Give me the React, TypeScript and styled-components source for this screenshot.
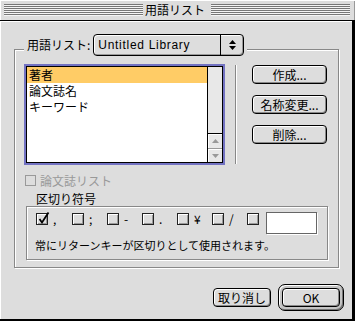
import styled, { createGlobalStyle } from "styled-components";

const GlobalStyle = createGlobalStyle`
  * { box-sizing: border-box; }
  html, body { margin: 0; padding: 0; background: #dddddd; }
  body {
    font-family: "Noto Sans CJK JP", "DejaVu Sans", sans-serif;
    font-size: 12px;
    color: #000;
  }
`;

const Window = styled.div`
  width: 355px;
  height: 321px;
  display: flex;
  flex-direction: column;
  background: #dddddd;
`;

const TitleBar = styled.div`
  flex: none;
  height: 21px;
  display: flex;
  align-items: center;
  padding: 0 5px 1px 4px;
  border-bottom: 1px solid #000;
  box-shadow: inset 1px 1px 0 #fff, inset -1px 0 0 #999;
`;

const Stripes = styled.div`
  flex: 1;
  height: 12px;
  background: repeating-linear-gradient(to bottom, #777 0 1px, #f4f4f4 1px 2px);
`;

const Title = styled.div`
  width: 68px;
  padding: 0 6px 0 2px;
  line-height: 14px;
  text-align: center;
`;

const Body = styled.div`
  flex: 1;
  display: flex;
  flex-direction: column;
  padding: 28px 0 0 14px;
  border-right: 3px solid #000;
  border-bottom: 2px solid #000;
  box-shadow: inset 1px 1px 0 #fff;
`;

const Group = styled.div<{ $w: number; $h: number }>`
  position: relative;
  width: ${(p) => p.$w}px;
  height: ${(p) => p.$h}px;
  border: 1px solid #888;
  box-shadow: inset 1px 1px 0 #fff, 1px 1px 0 #fff;
`;

const OuterGroup = styled(Group)`
  padding: 14px 11px 0 9px;
`;

const InnerGroup = styled(Group)`
  margin-top: 19px;
  margin-left: 2px;
  padding: 5px 0 0 9px;
`;

const Legend = styled.div<{ $left: number; $top: number }>`
  position: absolute;
  left: ${(p) => p.$left}px;
  top: ${(p) => p.$top}px;
  display: flex;
  align-items: center;
  gap: 3px;
  padding: 0 3px;
  background: #dddddd;
  line-height: 14px;
`;

const Popup = styled.div`
  width: 151px;
  height: 22px;
  display: flex;
  border: 1px solid #000;
  border-radius: 4px;
  background: #dddddd;
  box-shadow: inset 1px 1px 0 #fff, inset -1px -1px 0 #999;
`;

const PopupText = styled.div`
  flex: 1;
  padding-left: 4px;
  font-family: "Liberation Sans", "Noto Sans CJK JP", sans-serif;
  line-height: 20px;
  letter-spacing: 0.7px;
`;

const PopupArrow = styled.div`
  width: 23px;
  border-left: 1px solid #000;
  display: flex;
  align-items: center;
  justify-content: center;
`;

const TopRow = styled.div`
  display: flex;
  align-items: flex-start;
`;

const ListFrame = styled.div`
  width: 201px;
  height: 101px;
  border: 2px solid #7272c2;
  display: flex;
`;

const ListInner = styled.div`
  flex: 1;
  display: flex;
  border: 1px solid #000;
  background: #fff;
`;

const Rows = styled.div`
  flex: 1;
`;

const Row = styled.div<{ $selected?: boolean }>`
  height: 16px;
  padding-left: 2px;
  line-height: 16px;
  background: ${(p) => (p.$selected ? "#ffcc66" : "transparent")};
`;

const ScrollBar = styled.div`
  width: 15px;
  display: flex;
  flex-direction: column;
  border-left: 1px solid #000;
  background: #e8e8e8;
`;

const Track = styled.div`
  flex: 1;
  border-bottom: 1px solid #000;
`;

const ScrollArrow = styled.div<{ $h: number; $divider?: boolean }>`
  height: ${(p) => p.$h}px;
  display: flex;
  align-items: center;
  justify-content: center;
  border-bottom: ${(p) => (p.$divider ? "1px solid #999" : "none")};
  box-shadow: inset 1px 1px 0 #fff;
`;

const Separator = styled.div`
  width: 2px;
  height: 99px;
  margin: 1px 15px 0 10px;
  border-left: 1px solid #888;
  background: #fff;
`;

const ButtonColumn = styled.div`
  display: flex;
  flex-direction: column;
  gap: 11px;
  margin-top: 1px;
`;

const Button = styled.button<{ $w: number }>`
  width: ${(p) => p.$w}px;
  height: 19px;
  padding: 0;
  border: 1px solid #000;
  border-radius: 4px;
  background: #dddddd;
  box-shadow: inset 1px 1px 0 #fff, inset -1px -1px 0 #888;
  font-family: inherit;
  font-size: 12px;
  line-height: 17px;
  color: #000;
`;

const DefaultRing = styled.div`
  padding: 3px;
  border: 1px solid #000;
  border-radius: 7px;
  background: #c4c4c4;
  box-shadow: inset 1px 1px 0 #fff, inset -1px -1px 0 #777;
  display: flex;
`;

const CheckRow = styled.div`
  display: flex;
  align-items: flex-start;
  gap: 4px;
  height: 12px;
  margin: 10px 0 0 1px;
  color: #999;
  line-height: 12px;
`;

const DisabledBox = styled.span`
  width: 11px;
  height: 11px;
  border: 1px solid #999;
`;

const SepRow = styled.div`
  display: flex;
  align-items: flex-start;
  height: 22px;
`;

const SepItem = styled.div<{ $w: number }>`
  width: ${(p) => p.$w}px;
  display: flex;
  align-items: center;
  gap: 5px;
  margin-top: 1px;
  line-height: 12px;
`;

const Box = styled.span`
  position: relative;
  flex: none;
  width: 12px;
  height: 12px;
  border: 1px solid #222;
  background: #dddddd;
  box-shadow: inset 1px 1px 0 #fff, inset -1px -1px 0 #999;
`;

const CheckMark = styled.svg`
  position: absolute;
  left: 1px;
  top: -2px;
`;

const Field = styled.div`
  width: 51px;
  height: 22px;
  margin-left: 7px;
  border: 1px solid #666;
  background: #fff;
  box-shadow: 1px 1px 0 #fff;
`;

const Note = styled.div`
  margin: 4px 0 0 -1px;
  font-size: 11px;
  line-height: 14px;
`;

const ButtonRow = styled.div`
  display: flex;
  justify-content: flex-end;
  align-items: center;
  gap: 7px;
  margin-top: 16px;
  padding-right: 8px;
`;

const separators = [",", ";", "-", ".", "¥", "/"];

export default function App() {
  return (
    <>
      <GlobalStyle />
      <Window>
        <TitleBar>
          <Stripes />
          <Title>用語リスト</Title>
          <Stripes />
        </TitleBar>
        <Body>
          <OuterGroup $w={325} $h={219}>
            <Legend $left={9} $top={-16}>
              <span>用語リスト:</span>
              <Popup>
                <PopupText>Untitled Library</PopupText>
                <PopupArrow>
                  <svg width="7" height="10" viewBox="0 0 7 10">
                    <path d="M3.5 0 L7 4 L0 4 Z M0 6 L7 6 L3.5 10 Z" fill="#000" />
                  </svg>
                </PopupArrow>
              </Popup>
            </Legend>
            <TopRow>
              <ListFrame>
                <ListInner>
                  <Rows>
                    <Row $selected>著者</Row>
                    <Row>論文誌名</Row>
                    <Row>キーワード</Row>
                  </Rows>
                  <ScrollBar>
                    <Track />
                    <ScrollArrow $h={15} $divider>
                      <svg width="7" height="4" viewBox="0 0 7 4">
                        <path d="M3.5 0 L7 4 L0 4 Z" fill="#999" />
                      </svg>
                    </ScrollArrow>
                    <ScrollArrow $h={13}>
                      <svg width="7" height="4" viewBox="0 0 7 4">
                        <path d="M0 0 L7 0 L3.5 4 Z" fill="#999" />
                      </svg>
                    </ScrollArrow>
                  </ScrollBar>
                </ListInner>
              </ListFrame>
              <Separator />
              <ButtonColumn>
                <Button $w={75}>作成...</Button>
                <Button $w={75}>名称変更...</Button>
                <Button $w={75}>削除...</Button>
              </ButtonColumn>
            </TopRow>
            <CheckRow>
              <DisabledBox />
              <span>論文誌リスト</span>
            </CheckRow>
            <InnerGroup $w={302} $h={54}>
              <Legend $left={6} $top={-15}>
                <span>区切り符号</span>
              </Legend>
              <SepRow>
                {separators.map((s, i) => (
                  <SepItem key={s} $w={i === 0 ? 36 : 35}>
                    <Box>
                      {i === 0 && (
                        <CheckMark width="12" height="13" viewBox="0 0 12 13">
                          <path d="M1.5 7 L4 10.5 L10.5 0.5" stroke="#000" strokeWidth="1.8" fill="none" />
                        </CheckMark>
                      )}
                    </Box>
                    <span>{s}</span>
                  </SepItem>
                ))}
                <SepItem $w={12}>
                  <Box />
                </SepItem>
                <Field />
              </SepRow>
              <Note>常にリターンキーが区切りとして使用されます。</Note>
            </InnerGroup>
          </OuterGroup>
          <ButtonRow>
            <Button $w={58}>取り消し</Button>
            <DefaultRing>
              <Button $w={58}>OK</Button>
            </DefaultRing>
          </ButtonRow>
        </Body>
      </Window>
    </>
  );
}
